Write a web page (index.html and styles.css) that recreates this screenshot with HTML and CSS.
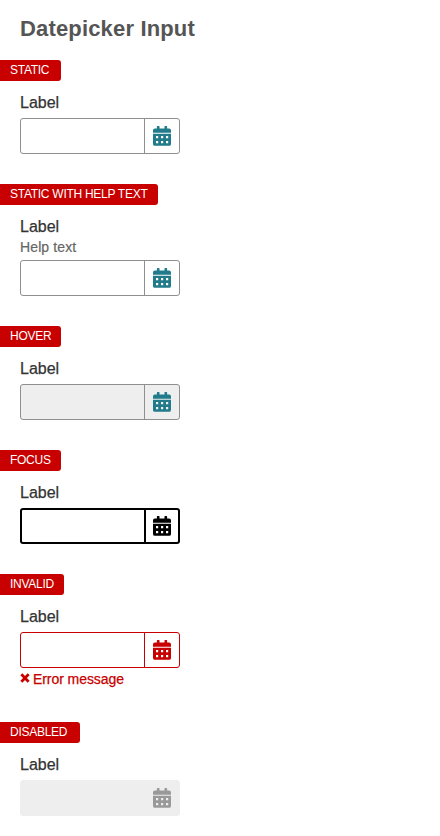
FILE: index.html
```html
<!DOCTYPE html>
<html lang="en">
<head>
<meta charset="utf-8">
<title>Datepicker Input</title>
<link rel="stylesheet" href="styles.css">
</head>
<body>
<svg width="0" height="0" class="sprite" aria-hidden="true">
  <symbol id="calendar" viewBox="0 0 18 20">
    <path fill-rule="evenodd" d="M0 6.7V4.4a1.9 1.9 0 0 1 1.9-1.9H3.9V.5a.5.5 0 0 1 .5-.5H6a.5.5 0 0 1 .5.5v2h5v-2A.5.5 0 0 1 12 0h1.6a.5.5 0 0 1 .5.5v2h2A1.9 1.9 0 0 1 18 4.4v2.3zM0 7.8h18v10.1a1.9 1.9 0 0 1-1.9 1.9H1.9A1.9 1.9 0 0 1 0 17.9zM3 10v2.2h2.2V10zM8 10v2.2h2.2V10zM13 10v2.2h2.2V10zM3 15v2.2h2.2V15zM8 15v2.2h2.2V15zM13 15v2.2h2.2V15z"/>
  </symbol>
</svg>
<h1 class="title">Datepicker Input</h1>
<main class="states">
  <section class="state">
    <span class="tag">STATIC</span>
    <div class="field">
      <div class="label">Label</div>
      <div class="picker"><div class="value"></div><div class="toggle"><svg class="icon"><use href="#calendar"/></svg></div></div>
    </div>
  </section>
  <section class="state">
    <span class="tag tag-help">STATIC WITH HELP TEXT</span>
    <div class="field">
      <div class="label">Label</div>
      <div class="help">Help text</div>
      <div class="picker"><div class="value"></div><div class="toggle"><svg class="icon"><use href="#calendar"/></svg></div></div>
    </div>
  </section>
  <section class="state">
    <span class="tag">HOVER</span>
    <div class="field">
      <div class="label">Label</div>
      <div class="picker hover"><div class="value"></div><div class="toggle"><svg class="icon"><use href="#calendar"/></svg></div></div>
    </div>
  </section>
  <section class="state">
    <span class="tag">FOCUS</span>
    <div class="field">
      <div class="label">Label</div>
      <div class="picker focus"><div class="value"></div><div class="toggle"><svg class="icon"><use href="#calendar"/></svg></div></div>
    </div>
  </section>
  <section class="state">
    <span class="tag tag-invalid">INVALID</span>
    <div class="field">
      <div class="label">Label</div>
      <div class="picker invalid"><div class="value"></div><div class="toggle"><svg class="icon"><use href="#calendar"/></svg></div></div>
      <div class="error"><svg class="cross" viewBox="0 0 9 9"><path d="M1.2 1.2l6.6 6.6M7.8 1.2L1.2 7.8"/></svg><span class="message">Error message</span></div>
    </div>
  </section>
  <section class="state">
    <span class="tag tag-disabled">DISABLED</span>
    <div class="field">
      <div class="label">Label</div>
      <div class="picker disabled"><div class="value"></div><div class="toggle"><svg class="icon"><use href="#calendar"/></svg></div></div>
    </div>
  </section>
</main>
</body>
</html>
```
FILE: styles.css
```css
* { box-sizing: border-box; }
body {
  margin: 0;
  background: #fff;
  color: #333;
  font-family: "Liberation Sans", Arial, sans-serif;
}
.sprite { display: block; }
.title {
  margin: 0;
  height: 60px;
  padding: 16px 20px 0;
  font-size: 22px;
  line-height: 26px;
  letter-spacing: 0.16px;
  color: #555;
}
.states {
  display: flex;
  flex-direction: column;
  gap: 30px;
}
.tag {
  display: block;
  width: 61px;
  height: 21px;
  padding-left: 10px;
  border-radius: 0 3px 3px 0;
  background: #c80000;
  color: #fff;
  font-size: 12px;
  line-height: 20px;
  letter-spacing: -0.27px;
  white-space: nowrap;
}
.tag-help { width: 158px; }
.tag-invalid { width: 64px; }
.tag-disabled { width: 80px; }
.field { padding: 12px 20px 0; }
.label {
  height: 25px;
  font-size: 16px;
  line-height: 20px;
  -webkit-text-stroke: 0.25px;
}
.help {
  height: 18px;
  margin-top: -2px;
  margin-bottom: 2px;
  font-size: 14px;
  line-height: 14px;
  letter-spacing: 0.12px;
  color: #666;
  -webkit-text-stroke: 0.2px;
}
.picker {
  display: flex;
  width: 160px;
  height: 36px;
  border: 1px solid #8f8f8f;
  border-radius: 3px;
  color: #217b8b;
}
.value { flex: 1; }
.toggle {
  display: flex;
  width: 35px;
  padding: 7px 0 0 8px;
  border-left: 1px solid #8f8f8f;
}
.icon {
  display: block;
  width: 18px;
  height: 20px;
  fill: currentColor;
}
.hover { background: #eee; }
.focus {
  border: 2px solid #000;
  color: #000;
}
.focus .toggle {
  width: 34px;
  padding: 6px 0 0 7px;
  border-left: 2px solid #000;
}
.invalid, .invalid .toggle { border-color: #c80000; }
.invalid { color: #c80000; }
.disabled, .disabled .toggle { border-color: #eee; }
.disabled {
  background: #eee;
  color: #999;
}
.error {
  display: flex;
  height: 24px;
  gap: 3px;
  color: #c80000;
  font-size: 14px;
  line-height: 22px;
}
.cross {
  width: 10px;
  height: 10px;
  margin-top: 5px;
  fill: none;
  stroke: currentColor;
  stroke-width: 2.5;
}
.message {
  letter-spacing: -0.07px;
  -webkit-text-stroke: 0.25px;
}
```
